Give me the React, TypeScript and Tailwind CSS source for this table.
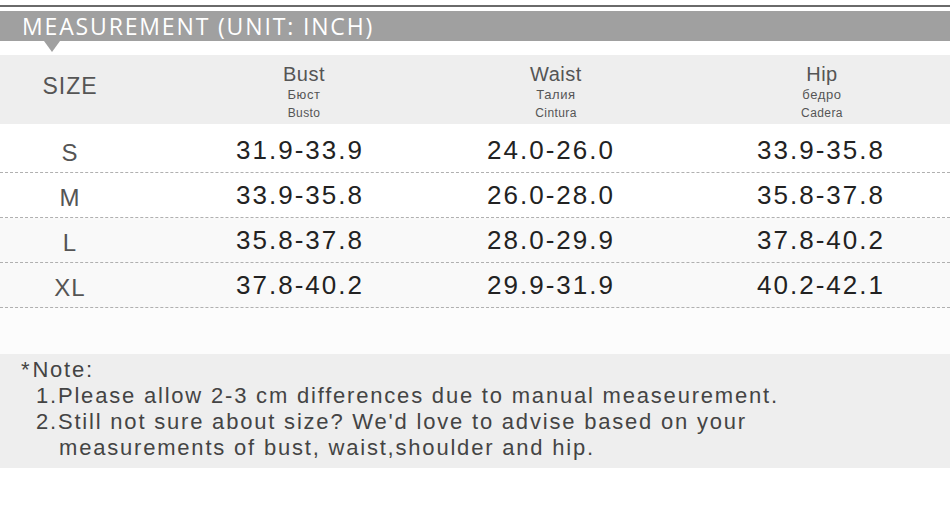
const rows = [
  { size: 'S', bust: '31.9-33.9', waist: '24.0-26.0', hip: '33.9-35.8', tall: true, shade: false },
  { size: 'M', bust: '33.9-35.8', waist: '26.0-28.0', hip: '35.8-37.8', tall: false, shade: false },
  { size: 'L', bust: '35.8-37.8', waist: '28.0-29.9', hip: '37.8-40.2', tall: false, shade: true },
  { size: 'XL', bust: '37.8-40.2', waist: '29.9-31.9', hip: '40.2-42.1', tall: false, shade: true },
];

const heads = [
  { en: 'Bust', ru: 'Бюст', es: 'Busto', pad: 'pl-[8px]' },
  { en: 'Waist', ru: 'Талия', es: 'Cintura', pad: 'pl-[10px]' },
  { en: 'Hip', ru: 'бедро', es: 'Cadera', pad: 'pl-[52px]' },
];

const grid = 'grid grid-cols-[140px_320px_182px_1fr]';

function HeadCell({ en, ru, es, pad }: { en: string; ru: string; es: string; pad: string }) {
  return (
    <div className={`flex flex-col items-center pt-[8px] text-[#555] ${pad}`}>
      <span className="text-[20px] leading-[22px] tracking-[0.5px]">{en}</span>
      <span className="text-[13px] leading-[19px] tracking-[0.6px] text-[#555]">{ru}</span>
      <span className="text-[12px] leading-[18px] tracking-[0.4px] text-[#555]">{es}</span>
    </div>
  );
}

export default function App() {
  return (
    <div className="h-[528px] w-[950px] overflow-hidden bg-white font-['Liberation_Sans',Arial,sans-serif]">
      <div className="h-[5px]" />
      <div className="h-[2px] bg-[#6a6a6a]" />
      <div className="h-[4px]" />
      <div className="relative flex h-[30px] items-center bg-[#a0a0a0] pl-[22px] font-['Open_Sans',sans-serif] text-[23px] tracking-[1.85px] text-white">
        MEASUREMENT (UNIT: INCH)
        <div className="absolute left-[44px] top-[30px] h-0 w-0 border-x-[8px] border-t-[11px] border-x-transparent border-t-[#a0a0a0]" />
      </div>
      <div className="h-[14px]" />

      <div className={`${grid} h-[69px] bg-[#eeeeee]`}>
        <div className="flex items-center justify-center pb-[6px] text-[23px] tracking-[1px] text-[#555]">SIZE</div>
        {heads.map((h) => (
          <HeadCell key={h.en} {...h} />
        ))}
      </div>

      {rows.map((r) => (
        <div
          key={r.size}
          className={`${grid} items-center border-b border-dashed border-[#b0b0b0] text-[26px] ${r.tall ? 'h-[49px] pt-[4px]' : 'h-[45px]'} ${r.shade ? 'bg-[#f9f9f9]' : 'bg-white'}`}
        >
          <div className="pt-[6px] text-center text-[24px] tracking-[1px] text-[#555]">{r.size}</div>
          <div className="text-center tracking-[2px] text-[#222]">{r.bust}</div>
          <div className="text-center tracking-[2px] text-[#222]">{r.waist}</div>
          <div className="pl-[50px] text-center tracking-[2px] text-[#222]">{r.hip}</div>
        </div>
      ))}

      <div className="h-[46px] bg-[#fcfcfc]" />

      <div className="h-[114px] bg-[#eeeeee] pt-[3px] text-[22px] leading-[26px] tracking-[1.8px] text-[#444]">
        <p className="pl-[21px]">
          <span className="pr-[1px]">*</span>Note:
        </p>
        <p className="pl-[36px]">1.Please allow 2-3 cm differences due to manual measeurement.</p>
        <p className="pl-[36px]">2.Still not sure about size? We'd love to advise based on your</p>
        <p className="pl-[59px]">measurements of bust, waist,shoulder and hip.</p>
      </div>
    </div>
  );
}
